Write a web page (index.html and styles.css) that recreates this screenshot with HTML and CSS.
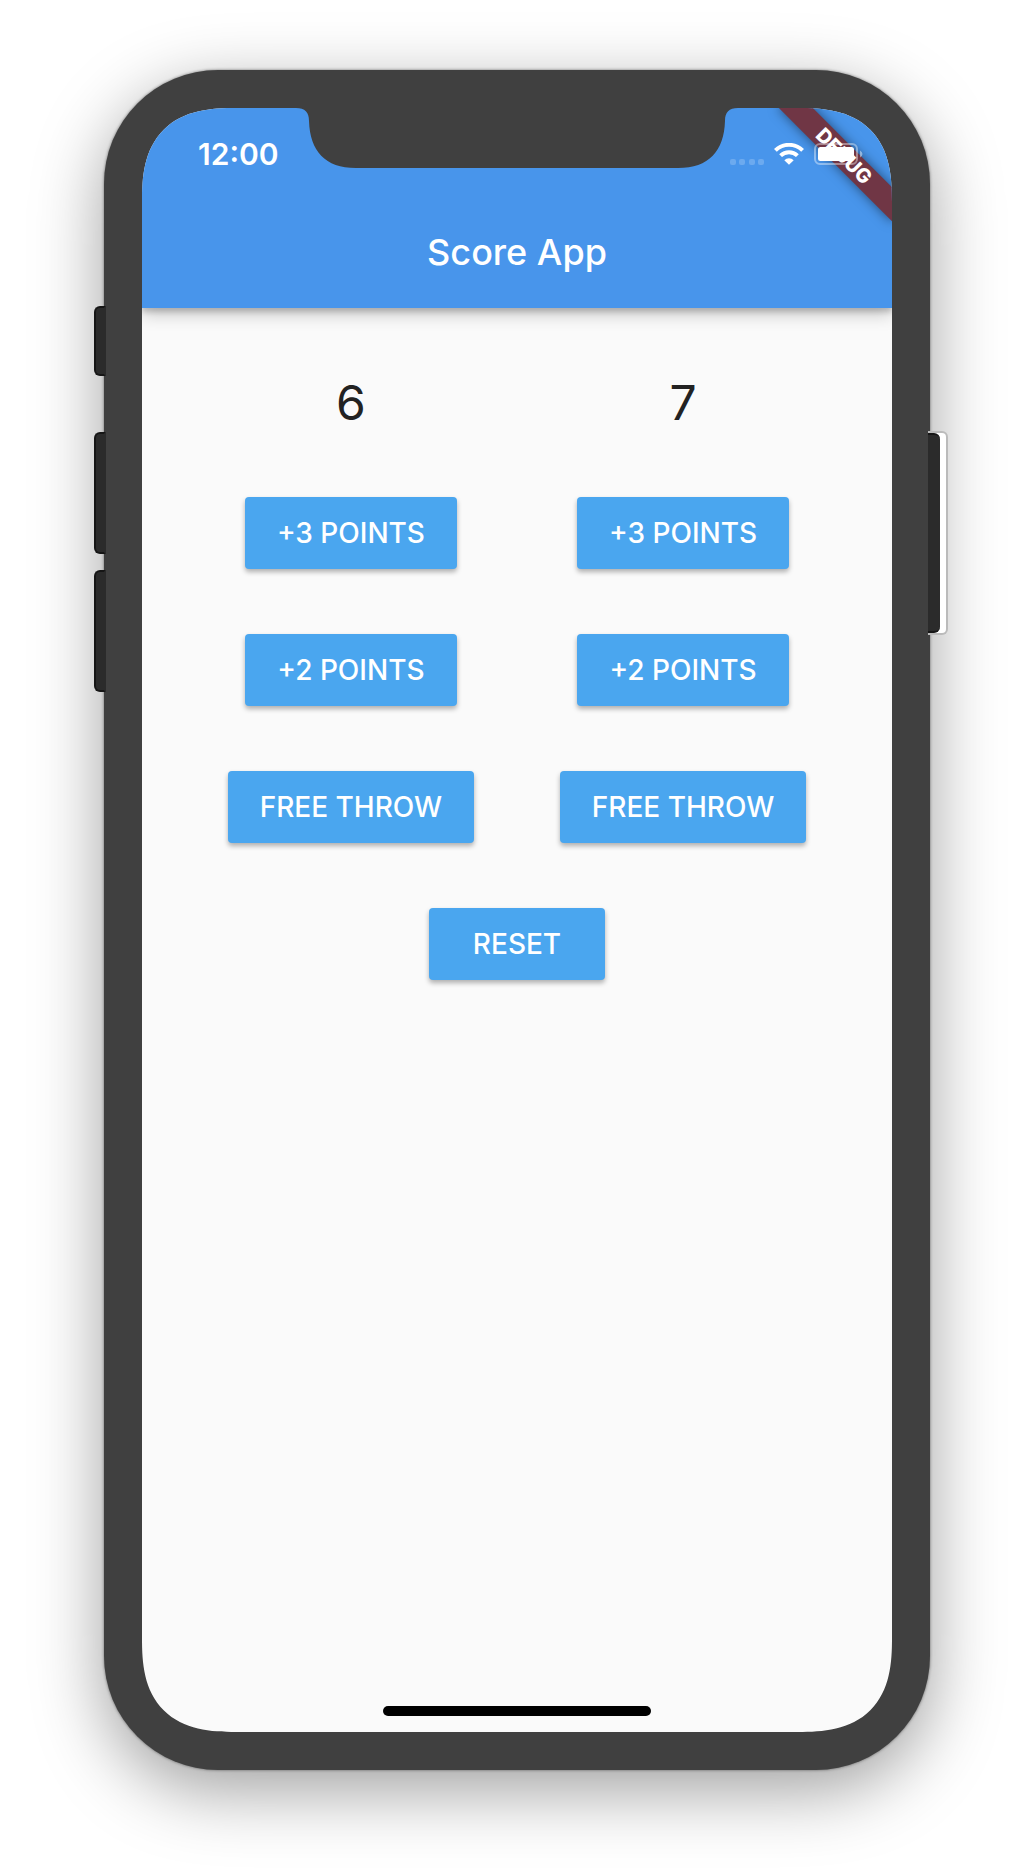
FILE: index.html
```html
<!DOCTYPE html>
<html lang="en">
<head>
<meta charset="utf-8">
<meta name="viewport" content="width=device-width, initial-scale=1">
<title>Score App</title>
<link rel="stylesheet" href="styles.css">
</head>
<body>
<div class="phone">
  <div class="rail rail-left">
    <span class="key key-mute"></span>
    <span class="key key-volume"></span>
    <span class="key key-volume"></span>
  </div>
  <div class="rail rail-right"><span class="key key-power"></span></div>

  <div class="screen">
    <header class="app-bar">
      <div class="ribbon">DEBUG</div>
      <div class="status-bar">
        <time class="clock">12:00</time>
        <svg class="notch" width="442" height="60" viewBox="0 0 442 60" aria-hidden="true">
          <path d="M0 0C9 0 13 4 13 13C14 43 29 60 60 60H382C413 60 428 43 429 13C429 4 433 0 442 0Z"/>
        </svg>
        <div class="indicators">
          <svg width="34" height="22" viewBox="0 0 34 22" aria-hidden="true">
            <g fill="#fff" fill-opacity=".2">
              <rect x="0" y="16" width="6" height="6" rx="2"/>
              <rect x="9" y="16" width="6" height="6" rx="2"/>
              <rect x="19" y="16" width="6" height="6" rx="2"/>
              <rect x="28" y="16" width="6" height="6" rx="2"/>
            </g>
          </svg>
          <svg width="30" height="22" viewBox="0 0 30 22" aria-hidden="true">
            <g fill="none" stroke="#fff" stroke-width="4">
              <path d="M1.400 7.400A19.400 19.400 0 0 1 28.600 7.400"/>
              <path d="M6.600 12.600A12 12 0 0 1 23.400 12.600"/>
            </g>
            <path d="M10.300 17.200A6.800 6.800 0 0 1 19.700 17.200L15 21.800Z" fill="#fff"/>
          </svg>
          <svg width="49" height="22" viewBox="0 0 49 22" aria-hidden="true">
            <rect x="1" y="1" width="42" height="20" rx="5" fill="none" stroke="#fff" stroke-opacity=".4" stroke-width="2"/>
            <rect x="4" y="4" width="36" height="14" rx="2.500" fill="#fff"/>
            <path d="M46 7.500Q48.500 9 48.500 11T46 14.500Z" fill="#fff" fill-opacity=".45"/>
          </svg>
        </div>
      </div>
      <h1 class="title">Score App</h1>
    </header>

    <main class="board">
      <div class="teams">
        <section class="team" aria-label="Team A">
          <output class="score">6</output>
          <button class="btn" type="button">+3 POINTS</button>
          <button class="btn" type="button">+2 POINTS</button>
          <button class="btn" type="button">FREE THROW</button>
        </section>
        <section class="team" aria-label="Team B">
          <output class="score">7</output>
          <button class="btn" type="button">+3 POINTS</button>
          <button class="btn" type="button">+2 POINTS</button>
          <button class="btn" type="button">FREE THROW</button>
        </section>
      </div>
      <button class="btn" type="button">RESET</button>
    </main>
    <div class="home-indicator"></div>
  </div>
</div>
</body>
</html>
```

FILE: styles.css
```css
* {
  box-sizing: border-box;
}

body {
  display: flex;
  min-height: 100vh;
  margin: 0;
  padding: 70px 104px 102px;
  background: #fff;
  font-family: Inter, "Liberation Sans", sans-serif;
}

/* Device frame */
.phone {
  position: relative;
  display: flex;
  flex: 1;
  padding: 38px;
  border-radius: 114px;
  background: #404040;
  box-shadow: 0 0 3px rgba(0, 0, 0, 0.5), 0 20px 70px rgba(0, 0, 0, 0.38);
}

.rail {
  position: absolute;
  display: flex;
  flex-direction: column;
}

.rail-left {
  top: 236px;
  left: -10px;
}

.rail-right {
  top: 361px;
  right: -18px;
  padding-right: 6px;
  border: 2px solid #bbb;
  border-left: 0;
  border-radius: 0 6px 6px 0;
  background: #fff;
}

.key {
  width: 12px;
  border: 2px solid #161616;
  background: #2b2b2b;
}

.rail-left .key {
  border-right-color: #2b2b2b;
  border-radius: 6px 0 0 6px;
}

.rail-right .key {
  border-width: 2px 0;
  border-radius: 0 6px 6px 0;
}

.key-mute {
  height: 70px;
  margin-bottom: 56px;
}

.key-volume {
  height: 122px;
}

.key-volume + .key-volume {
  margin-top: 16px;
}

.key-power {
  height: 200px;
}

/* Screen */
.screen {
  position: relative;
  display: flex;
  flex: 1;
  flex-direction: column;
  align-items: center;
  overflow: hidden;
  padding-bottom: 16px;
  border-radius: 78px;
  background: #fafafa;
  color: #222;
}

@supports (corner-shape: superellipse(1.4)) {
  .screen {
    border-radius: 94px;
    corner-shape: superellipse(1.4);
  }
}

.app-bar {
  position: relative;
  align-self: stretch;
  height: 200px;
  background: #4895eb;
  box-shadow: 0 4px 5px rgba(0, 0, 0, 0.16), 0 6px 16px rgba(0, 0, 0, 0.22);
  color: #fff;
}

.status-bar {
  position: relative;
  display: grid;
  grid-template-columns: minmax(0, 1fr) auto minmax(0, 1fr);
  height: 88px;
}

.clock {
  padding: 28px 0 0 56px;
  font-size: 30px;
  font-weight: 600;
  line-height: 36px;
}

.notch {
  fill: #404040;
}

.indicators {
  display: flex;
  justify-content: flex-end;
  gap: 10px;
  padding: 35px 29px 0 0;
}

.indicators svg {
  flex: none;
}

.title {
  margin: 0;
  font-size: 36px;
  font-weight: 500;
  line-height: 112px;
  text-align: center;
}

.ribbon {
  position: absolute;
  top: 56px;
  right: -80px;
  width: 160px;
  height: 24px;
  background: #703645;
  box-shadow: 0 0 12px rgba(0, 0, 0, 0.5);
  font-size: 20px;
  font-weight: 800;
  line-height: 24px;
  text-align: center;
  transform: rotate(45deg);
  transform-origin: center -56px;
}

/* Scoreboard */
.board {
  display: flex;
  flex: 1;
  flex-direction: column;
  align-items: center;
  align-self: stretch;
  gap: 65px;
  padding-top: 66px;
}

.teams {
  display: flex;
  align-self: stretch;
  justify-content: space-evenly;
}

.team {
  display: flex;
  flex-direction: column;
  align-items: center;
  gap: 65px;
}

.score {
  font-size: 48px;
  line-height: 58px;
}

.btn {
  min-width: 176px;
  height: 72px;
  padding: 0 32px;
  border: 0;
  border-radius: 4px;
  background: #4aa6ef;
  box-shadow: 0 3px 5px rgba(0, 0, 0, 0.3);
  color: #fff;
  font-family: inherit;
  font-size: 28px;
  font-weight: 500;
}

.home-indicator {
  width: 268px;
  height: 10px;
  border-radius: 5px;
  background: #000;
}
```
